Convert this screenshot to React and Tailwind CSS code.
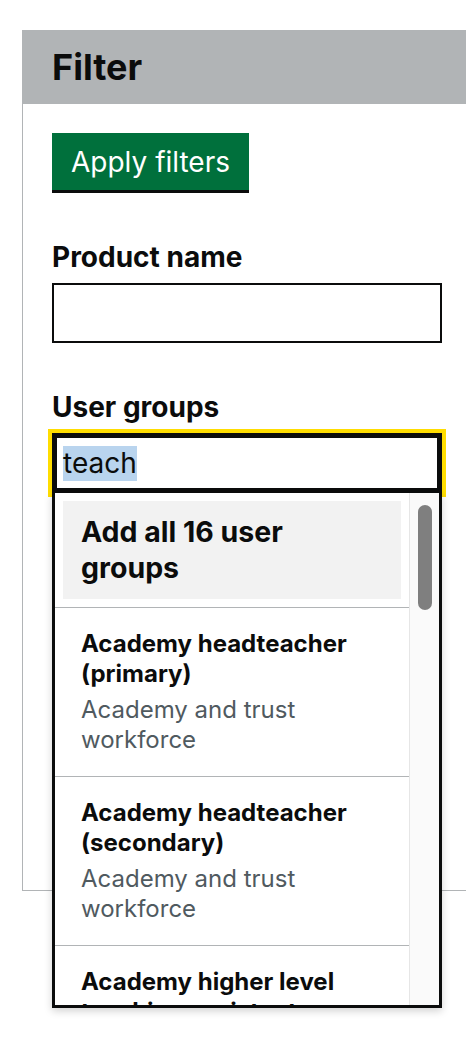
import React from 'react';

const options = [
  { name: 'Academy headteacher (primary)', hint: 'Academy and trust workforce' },
  { name: 'Academy headteacher (secondary)', hint: 'Academy and trust workforce' },
  { name: 'Academy higher level teaching assistant', hint: 'Academy and trust workforce' },
];

export default function App() {
  return (
    <div className="w-[466px] h-[1042px] overflow-hidden bg-white pt-[30px] pl-[22px] text-[#0b0c0c] font-['Inter','Liberation_Sans',sans-serif]">
      <div className="w-[480px] h-[861px] border-l border-b border-[#b1b4b6]">
        {/* header */}
        <div className="h-[74px] -ml-px bg-[#b1b4b6] pl-[30px] flex items-center">
          <h2 className="text-[36px] font-bold leading-none">Filter</h2>
        </div>

        <div className="pl-[29px] pt-[29px] w-[419px]">
          <button className="h-[57px] px-[19px] bg-[#00703c] text-white text-[28px] leading-none shadow-[0_3px_0_#0b0c0c]">
            Apply filters
          </button>

          <div className="mt-[51px]">
            <label className="block text-[28px] font-bold leading-[32px] mb-[10px]">Product name</label>
            <div className="w-[390px] h-[60px] border-2 border-[#0b0c0c] bg-white"></div>
          </div>

          <div className="mt-[48px]">
            <label className="block text-[28px] font-bold leading-[32px] mb-[10px]">User groups</label>
            <div className="relative w-[390px]">
              <div className="h-[60px] border-[5px] border-[#0b0c0c] bg-white outline-4 outline-[#ffdd00] flex items-center pl-[6px]">
                <span className="text-[28px] leading-[35px] bg-[#b9d4ee]">teach</span>
              </div>

              {/* dropdown menu */}
              <div className="absolute left-0 top-full w-[390px] h-[515px] bg-white border-x-[3px] border-b-[3px] border-[#0b0c0c] shadow-[0_3px_8px_rgba(0,0,0,0.18)] flex overflow-hidden">
                <ul className="flex-1 overflow-hidden">
                  <li className="p-[8px] border-b border-[#b1b4b6]">
                    <div className="bg-[#f2f2f2] px-[18px] py-[13px] text-[28.5px] font-bold leading-[36px]">
                      Add all 16 user groups
                    </div>
                  </li>
                  {options.map((o) => (
                    <li key={o.name} className="px-[26px] py-[21px] border-b border-[#b1b4b6]">
                      <div className="text-[24px] font-bold leading-[30px]">{o.name}</div>
                      <div className="mt-[6px] text-[24px] leading-[30px] text-[#505a5f]">{o.hint}</div>
                    </li>
                  ))}
                </ul>
                <div className="w-[30px] shrink-0 bg-[#fafafa] border-l border-[#e6e6e6] flex justify-center pt-[12px]">
                  <div className="w-[14px] h-[105px] rounded-full bg-[#7f7f7f]"></div>
                </div>
              </div>
            </div>
          </div>
        </div>
      </div>
    </div>
  );
}
